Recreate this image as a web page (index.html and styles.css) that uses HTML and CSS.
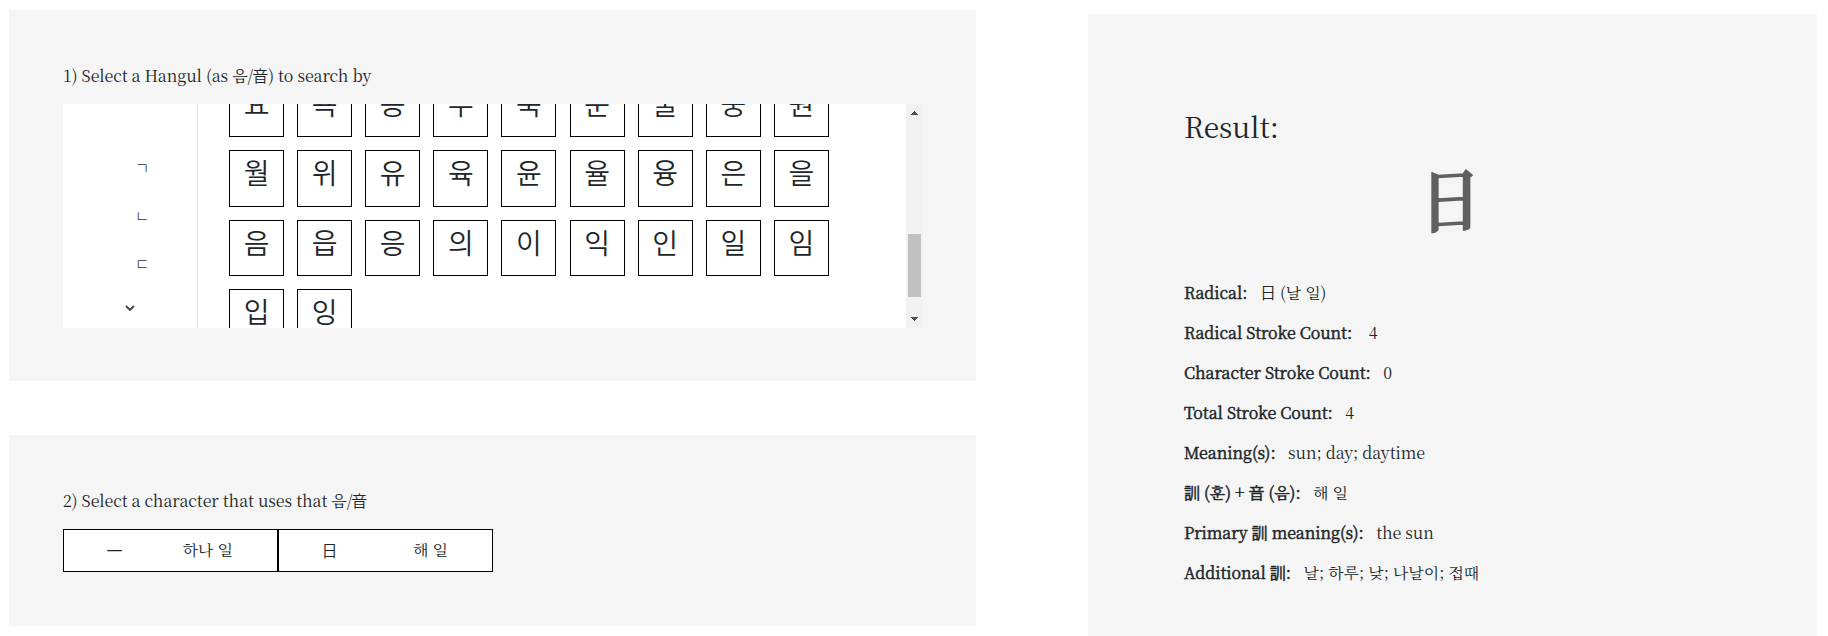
FILE: index.html
```html
<!DOCTYPE html>
<html lang="en">
<head>
<meta charset="utf-8">
<title>Hanja lookup</title>
<link rel="stylesheet" href="styles.css">
</head>
<body>
<main class="page">
  <div class="search">
    <section class="panel panel-hangul">
      <p class="prompt">1) Select a Hangul (as 음/<span class="han">音</span>) to search by</p>
      <div class="picker">
        <nav class="initials">
          <span class="initial">ㄱ</span>
          <span class="initial">ㄴ</span>
          <span class="initial">ㄷ</span>
          <svg class="chevron" viewBox="0 0 10 6"><path d="M1 1 L5 5 L9 1" /></svg>
        </nav>
        <div class="syllables">
          <div class="grid">
            <span class="cell">요</span><span class="cell">욕</span><span class="cell">용</span><span class="cell">우</span><span class="cell">욱</span><span class="cell">운</span><span class="cell">울</span><span class="cell">웅</span><span class="cell">원</span>
            <span class="cell">월</span><span class="cell">위</span><span class="cell">유</span><span class="cell">육</span><span class="cell">윤</span><span class="cell">율</span><span class="cell">융</span><span class="cell">은</span><span class="cell">을</span>
            <span class="cell">음</span><span class="cell">읍</span><span class="cell">응</span><span class="cell">의</span><span class="cell">이</span><span class="cell">익</span><span class="cell">인</span><span class="cell">일</span><span class="cell">임</span>
            <span class="cell">입</span><span class="cell">잉</span>
          </div>
        </div>
        <div class="scrollbar">
          <svg class="arrow" viewBox="0 0 7 4"><path d="M0 4V3H1V2H2V1H3V0H4V1H5V2H6V3H7V4Z" /></svg>
          <div class="thumb"></div>
          <svg class="arrow" viewBox="0 0 7 4"><path d="M0 0V1H1V2H2V3H3V4H4V3H5V2H6V1H7V0Z" /></svg>
        </div>
      </div>
    </section>
    <section class="panel panel-chars">
      <p class="prompt">2) Select a character that uses that 음/<span class="han">音</span></p>
      <div class="choices">
        <div class="choice"><span class="hanja">一</span><span class="reading">하나 일</span></div>
        <div class="choice"><span class="hanja">日</span><span class="reading">해 일</span></div>
      </div>
    </section>
  </div>
  <section class="result">
    <h2 class="title">Result:</h2>
    <div class="figure"><span class="character">日</span></div>
    <dl class="facts">
      <div class="fact"><dt>Radical:</dt><dd><span class="han">日</span> (날 일)</dd></div>
      <div class="fact wide"><dt>Radical Stroke Count:</dt><dd>4</dd></div>
      <div class="fact"><dt>Character Stroke Count:</dt><dd>0</dd></div>
      <div class="fact"><dt>Total Stroke Count:</dt><dd>4</dd></div>
      <div class="fact"><dt>Meaning(s):</dt><dd>sun; day; daytime</dd></div>
      <div class="fact"><dt><span class="han">訓</span> (훈) + <span class="han">音</span> (음):</dt><dd>해 일</dd></div>
      <div class="fact"><dt>Primary <span class="han">訓</span> meaning(s):</dt><dd>the sun</dd></div>
      <div class="fact"><dt>Additional <span class="han">訓</span>:</dt><dd>날; 하루; 낮; 나날이; 접때</dd></div>
    </dl>
  </section>
</main>
</body>
</html>
```
FILE: styles.css
```css
* { box-sizing: border-box; }
body {
  margin: 0;
  background: #fff;
  color: #212529;
  font-family: "Noto Serif KR", "Noto Serif CJK KR", "Liberation Serif", "Noto Sans CJK KR", serif;
  font-size: 16px;
  line-height: 24px;
  letter-spacing: -0.04px;
}
p, h2, dl, dd { margin: 0; }
.page { display: flex; height: 636px; overflow: hidden; padding-left: 9px; }
.search { width: 967px; padding-top: 10px; }
.panel { background: #f5f5f5; padding-left: 54px; }
.panel-hangul { height: 371px; padding-top: 54px; }
.panel-chars { height: 191px; margin-top: 54px; padding-top: 54px; }
.prompt { height: 40px; white-space: nowrap; }
.han { font-family: "Noto Sans CJK KR", sans-serif; font-weight: 350; line-height: 1; }
.prompt .han { margin-left: -1px; }
.picker { display: flex; width: 860px; height: 224px; background: #fff; overflow: hidden; }
.initials {
  display: flex; flex-direction: column; align-items: center;
  width: 135px; border-right: 1px solid #dee2e6; padding-top: 39px;
}
.initial {
  height: 48px; line-height: 48px; padding-left: 24px;
  font-family: "Noto Sans CJK KR", sans-serif; font-size: 16px; font-weight: 300; color: #333;
}
.chevron { width: 10px; height: 6px; margin-top: 18px; fill: none; stroke: #444; stroke-width: 1.8; }
.syllables { flex: 1; overflow: hidden; padding-left: 31px; }
.grid {
  display: grid; grid-template-columns: repeat(9, 55px); grid-template-rows: 56px 57px 56px 56px;
  column-gap: 13.12px; row-gap: 13px; margin-top: -23px;
}
.cell {
  border: 1px solid #000; text-align: center;
  font-family: "Noto Sans CJK KR", sans-serif; font-size: 28px; font-weight: 350; line-height: 42px;
}
.scrollbar {
  display: flex; flex-direction: column; align-items: center; justify-content: space-between;
  width: 17px; background: #f1f1f1; padding: 7px 0;
}
.arrow { width: 7px; height: 4px; fill: #505050; }
.thumb { width: 13px; height: 63px; background: #c1c1c1; margin-top: 98px; }
.choices { display: flex; width: 430px; height: 43px; }
.choice {
  display: flex; align-items: center; width: 215px; padding-bottom: 1px; border: 1px solid #000; background: #fff;
}
.hanja { width: 101px; text-align: center; font-family: "Noto Sans CJK KR", sans-serif; font-weight: 350; }
.reading { flex: 1; text-align: right; padding-right: 44px; }
.result { width: 729px; margin-left: 112px; margin-top: 14px; padding: 94px 0 0 96px; background: #f5f5f5; }
.title { font-size: 28px; font-weight: 400; line-height: 36px; }
.figure { display: flex; height: 129px; padding-left: 232px; }
.character {
  width: 71px; font-size: 69px; font-weight: 600; line-height: 106px;
  color: #606060; -webkit-text-stroke: 1.6px #606060; transform: scaleX(.87) skewY(-3deg);
}
.fact { display: flex; gap: 12.5px; height: 40px; line-height: 39px; white-space: nowrap; }
.wide { gap: 16.5px; }
dt { -webkit-text-stroke: 0.5px #212529; }
```
